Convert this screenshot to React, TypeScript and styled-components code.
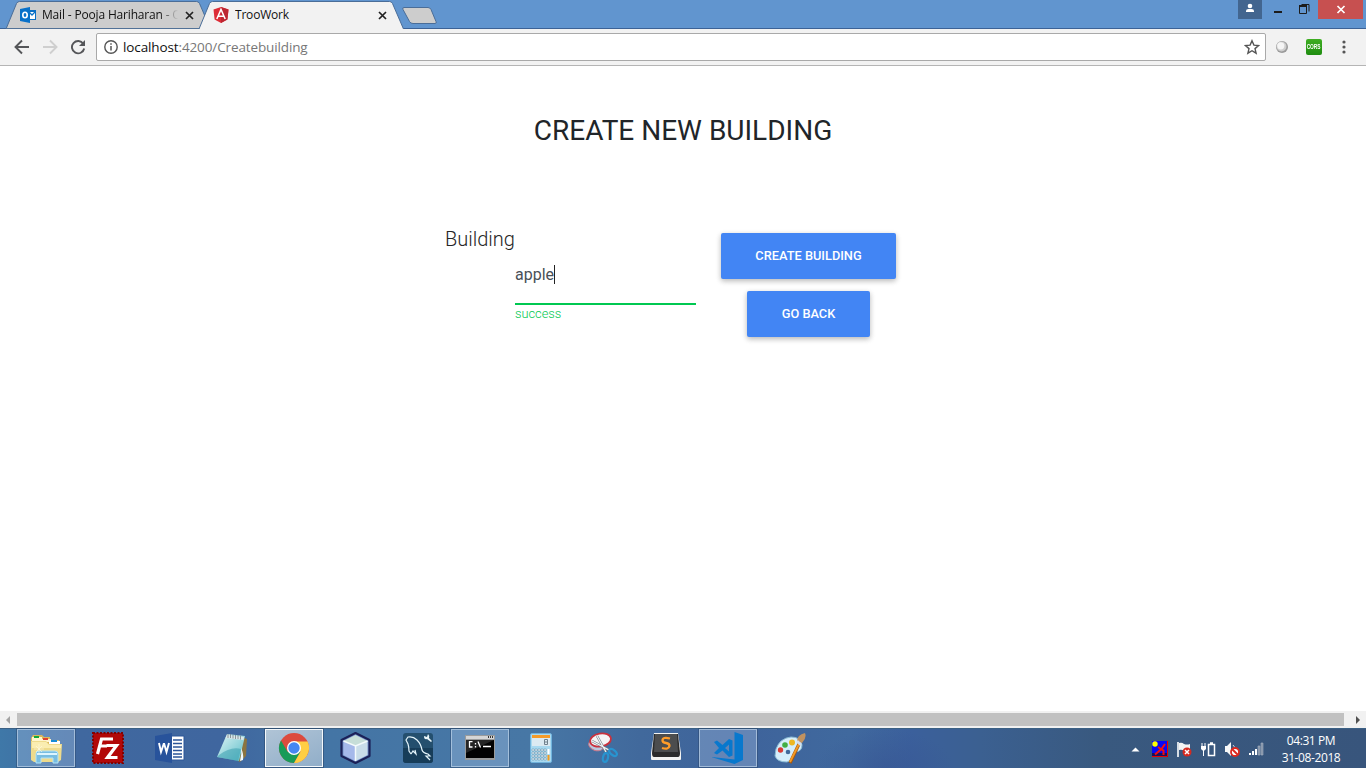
import React from "react";
import styled, { createGlobalStyle } from "styled-components";

const Global = createGlobalStyle`
  * { box-sizing: border-box; }
  body { margin: 0; overflow: hidden; background: #fff; }
  svg { display: block; flex: none; }
`;

const uiFont = `"Open Sans", "Noto Sans", sans-serif`;

const Screen = styled.div`
  width: 1366px;
  height: 768px;
  display: flex;
  flex-direction: column;
  overflow: hidden;
  background: #fff;
`;

/* ---------- browser window ---------- */

const TitleBar = styled.header`
  height: 29px;
  flex: none;
  display: flex;
  align-items: flex-start;
  padding-left: 5px;
  background: #6195cf;
  border-bottom: 1px solid #3c6296;
`;

const TabItem = styled.div<{ $active?: boolean }>`
  position: relative;
  z-index: ${(p) => (p.$active ? 2 : 1)};
  width: 206px;
  height: 29px;
  margin-right: -13px;
  padding: 1px 17px 0 15px;
  display: flex;
  align-items: center;
  font: 12px ${uiFont};
  color: #111;
`;

const TabShape = styled.svg`
  position: absolute;
  left: 0;
  top: 0;
  z-index: -1;
`;

const TabTitle = styled.span<{ $spacing: number; $fade?: boolean }>`
  flex: 1;
  margin-left: 6px;
  padding-bottom: 2px;
  overflow: hidden;
  white-space: nowrap;
  letter-spacing: ${(p) => p.$spacing}px;
  ${(p) => p.$fade && "mask-image: linear-gradient(90deg, #000 118px, transparent 136px);"}
`;

const NewTab = styled.svg`
  margin: 6px 0 0 10px;
`;

const WindowControls = styled.div`
  margin-left: auto;
  margin-right: 3px;
  display: flex;
  height: 19px;
`;

const Control = styled.div<{ $w: number; $bg?: string }>`
  width: ${(p) => p.$w}px;
  height: 19px;
  display: flex;
  justify-content: center;
  background: ${(p) => p.$bg ?? "transparent"};
`;

const Toolbar = styled.div`
  height: 37px;
  flex: none;
  display: flex;
  align-items: center;
  padding: 0 13px 1px 14px;
  background: #f2f2f2;
  border-bottom: 1px solid #b5b5b5;
`;

const NavIcons = styled.div`
  display: flex;
  gap: 12px;
  margin-right: 10px;
`;

const AddressBar = styled.div`
  width: 1170px;
  height: 28px;
  padding: 0 5px 0 6px;
  display: flex;
  align-items: center;
  background: #fff;
  border: 1px solid #a9a9a9;
  border-radius: 2px;
  font: 13.5px ${uiFont};
  color: #777;
`;

const Url = styled.span`
  flex: 1;
  margin-left: 4px;
  letter-spacing: -0.12px;
  b { font-weight: 400; color: #111; }
`;

const Extensions = styled.div`
  display: flex;
  align-items: center;
  margin-left: 8px;
`;

const CorsBadge = styled.span`
  width: 16px;
  height: 16px;
  margin: 0 20px 0 16px;
  border-radius: 2px;
  background: linear-gradient(#3fae22, #1e8c10);
  color: #fff;
  font: bold 8px/16px "Liberation Sans", sans-serif;
  text-align: center;
  display: flex;
  justify-content: center;
  span { transform: scaleX(0.6); }
`;

/* ---------- page ---------- */

const Page = styled.main`
  flex: 1;
  min-height: 0;
  font-family: Roboto, sans-serif;
  color: #212529;
  text-align: center;
`;

const Heading = styled.h3`
  margin: 0;
  padding-top: 48px;
  font-size: 28px;
  font-weight: 400;
  line-height: 34px;
`;

const Form = styled.form`
  display: flex;
  width: 451px;
  margin: 85px 0 0 445px;
  text-align: left;
`;

const Label = styled.label`
  width: 70px;
  margin-top: -8px;
  font-size: 20px;
  line-height: 28px;
  font-weight: 300;
  color: #262626;
  white-space: nowrap;
`;

const Field = styled.div`
  width: 181px;
  padding-top: 26px;
`;

const Value = styled.div`
  height: 46px;
  padding-top: 6px;
  display: flex;
  align-items: flex-start;
  border-bottom: 2px solid #00c851;
  font-size: 16px;
  line-height: 20px;
  color: #495057;
`;

const Caret = styled.i`
  width: 1px;
  height: 19px;
  background: #222;
`;

const Hint = styled.div`
  font-size: 12.8px;
  line-height: 17px;
  font-weight: 300;
  color: #00c851;
`;

const Actions = styled.div`
  display: flex;
  flex-direction: column;
  align-items: center;
  gap: 12px;
  width: 175px;
  margin-left: 25px;
`;

const Button = styled.button<{ $w: number }>`
  width: ${(p) => p.$w}px;
  height: 46px;
  padding: 0 0 2px;
  border: 0;
  border-radius: 2px;
  background: #4285f4;
  box-shadow: 0 2px 5px rgba(0, 0, 0, 0.16), 0 2px 6px rgba(0, 0, 0, 0.14);
  color: #fff;
  font: 500 12.8px Roboto, sans-serif;
`;

const ScrollBar = styled.div`
  height: 17px;
  flex: none;
  display: flex;
  align-items: center;
  padding: 0 5px;
  background: #f1f1f1;
`;

const Thumb = styled.div`
  width: 1327px;
  height: 13px;
  margin: 0 12px 0 7px;
  background: #c1c1c1;
`;

/* ---------- desktop taskbar ---------- */

const Taskbar = styled.footer`
  height: 40px;
  flex: none;
  display: flex;
  padding: 0 12px 0 17px;
  border-top: 1px solid #3b6084;
  background:
    radial-gradient(ellipse 70px 40px at 885px 40px, rgba(54, 82, 145, 0.5), transparent),
    linear-gradient(90deg, #3f78a8 0, #40689f 80px, #3f669f 220px, #4475a5 330px, #4777a5 530px, #41699c 640px, #3e639b 740px, #40699e 850px, #3b609c 910px, #3b6091 980px, #39597f 1100px, #38557c 1366px);
`;

const TaskList = styled.div`
  display: flex;
  gap: 4px;
`;

const Task = styled.div<{ $state?: "open" | "active" }>`
  width: 58px;
  height: 38px;
  display: flex;
  align-items: center;
  justify-content: center;
  ${(p) =>
    p.$state === "open" &&
    `background: rgba(180,205,235,.32); border: 1px solid rgba(195,215,235,.65); box-shadow: 0 0 0 1px rgba(40,65,100,.4);`}
  ${(p) =>
    p.$state === "active" &&
    `background: linear-gradient(155deg,#b0c4d6,#91aec9); border: 1px solid #f4f8fb; box-shadow: 0 0 0 1px rgba(40,65,100,.5);`}
`;

const Tray = styled.div`
  margin-left: auto;
  display: flex;
  align-items: center;
  gap: 8px;
  padding-top: 1px;
  color: #fff;
`;

const Clock = styled.div`
  width: 86px;
  margin: -1px 0 0 -4px;
  text-align: center;
  font: 12px/17px ${uiFont};
  letter-spacing: -0.4px;
`;

const I = ({ children, size = 32, box = 32 }: { children: React.ReactNode; size?: number; box?: number }) => (
  <svg width={size} height={size} viewBox={`0 0 ${box} ${box}`} fill="none">{children}</svg>
);

const Tab = ({ title, active, icon }: { title: string; active?: boolean; icon: React.ReactNode }) => (
  <TabItem $active={active}>
    <TabShape width="206" height="29" viewBox="0 0 206 29">
      <path
        d="M1 29L11.500 3.500Q12.500 1.500 14.500 1.500H191.500Q193.500 1.500 194.500 3.500L205.500 29"
        fill={active ? "#f2f2f2" : "#cdcdcd"}
        stroke="#4a6d98"
      />
      {!active && <path d="M1 28.5H205" stroke="#527297" />}
    </TabShape>
    {icon}
    <TabTitle $spacing={active ? -0.2 : -0.17} $fade={!active}>{title}</TabTitle>
    <I size={9} box={9}><path d="M1 1l7 7M8 1L1 8" stroke="#222" strokeWidth="1.7" /></I>
  </TabItem>
);

const Outlook = () => (
  <I size={16} box={16}>
    <path d="M8 3h8v10H8z" fill="#0b70c5" />
    <path d="M9 5h6v7H9z" fill="#fff" /><path d="M9 5l3 3 3-3" stroke="#0b70c5" strokeWidth="1.3" />
    <path d="M0 2l10-2v16L0 14z" fill="#0871c9" />
    <ellipse cx="5" cy="8" rx="2.2" ry="2.8" stroke="#fff" strokeWidth="1.6" />
  </I>
);

const Angular = () => (
  <I size={16} box={16}>
    <path d="M8 0l7.5 2.6-1.1 9.8L8 16l-6.4-3.6L.5 2.6z" fill="#dd2c37" />
    <path d="M8 0l7.5 2.6-1.1 9.8L8 16z" fill="#bd2631" />
    <path d="M3.8 12L8 2.4l4.2 9.6M5.5 9.2h5" stroke="#fff" strokeWidth="1.5" />
  </I>
);

const Explorer = () => (
  <I>
    <path d="M1 6l2-3h9l2 2h6v3h9v20H1z" fill="#d9b85b" />
    <path d="M2 5h10v4H2z" fill="#fff6ce" /><path d="M4 4h5v2H4z" fill="#12a83a" />
    <path d="M11 7h10v3H11z" fill="#fff4cf" /><path d="M13 6h5v2h-5z" fill="#dd4030" />
    <path d="M19 9h11v4H19z" fill="#fff" /><path d="M21 8h6v2h-6z" fill="#168cd5" />
    <path d="M1 9h15l3 3h13l-1 16-3 2H4l-3-2z" fill="#eedb8c" />
    <path d="M2 10h14l3 3h12v3H2z" fill="#faedb1" />
    <path d="M6 31V22q0-3 3-3h16q3 0 3 3v9h-5v-5H11v5z" fill="#78bde1" stroke="#b3e4f8" />
    <path d="M7 22h20" stroke="#dcf5ff" strokeWidth="2" />
    <path d="M9 12v10M4 17h10M6 14l6 6M12 14l-6 6" stroke="#fffbe4" strokeWidth=".6" />
  </I>
);

const FileZilla = () => (
  <I>
    <path d="M1 1h30v30H1z" fill="#b20808" stroke="#820000" strokeWidth="2" strokeDasharray="2 1.500" />
    <path d="M5.500 22L9.500 7H21M8 14H15" stroke="#fff" strokeWidth="3.200" />
    <path d="M14.500 13.500H24.500L15.500 25.500H25.500" stroke="#fff" strokeWidth="3.200" />
  </I>
);

const Word = () => (
  <I>
    <path d="M17 4h13v24H17z" fill="#fff" stroke="#2d5699" />
    <path d="M19 8h9M19 11.5h9M19 15h9M19 18.5h9M19 22h9M19 25h9" stroke="#2d5699" strokeWidth="1.5" />
    <path d="M1 4L18 1v30L1 28z" fill="#28539b" />
    <path d="M5 11l2 9 2.700-8h.500l2.300 8L15 11" stroke="#fff" strokeWidth="1.900" />
  </I>
);

const Notepad = () => (
  <I>
    <path d="M26 5l5 2-1 17-6 6-4-2z" fill="#8b7440" />
    <path d="M11 2l18 2-6 25L1 25z" fill="url(#note)" />
    <path d="M24 29q2-7 1-13 3 6 2 12z" fill="#eefaff" />
    <path d="M11 3l17 2-.6 3L9.5 6z" fill="#dce8ea" />
    <path d="M12 2v4M14.5 2v4M17 2.5v4M19.5 3v4M22 3v4M24.500 3.500v4" stroke="#718085" strokeWidth=".8" />
    <path d="M3 23q12-9 22-6l-3 12L1 25z" fill="#3b9fae" opacity=".55" />
    <defs><linearGradient id="note" x1="0" y1="0" x2="1" y2="1"><stop stopColor="#e2f5f5" /><stop offset="1" stopColor="#58bcc8" /></linearGradient></defs>
  </I>
);

const Chrome = () => (
  <I>
    <circle cx="16" cy="16" r="15" fill="#dc4b3e" />
    <path d="M3 8.500A15 15 0 0 0 16 31L22.500 19.750 9.500 19.750z" fill="#189b58" />
    <path d="M16 31A15 15 0 0 0 29.600 9.500H16L22.500 19.750z" fill="#ffce44" />
    <circle cx="16" cy="16" r="7" fill="#fff" /><circle cx="16" cy="16" r="5.700" fill="#4587f3" />
  </I>
);

const NetBeans = () => (
  <I>
    <path d="M15.500 1l14 7v16l-14 7-14-7V8z" fill="#7997cc" stroke="#1b2158" strokeWidth="2.200" strokeLinejoin="round" />
    <path d="M3.500 9l12 5v15L3.500 23z" fill="#a5b9ea" /><path d="M27.500 9l-12 5v15l12-6z" fill="#c9dde9" />
    <path d="M15.500 3l12 6-12 5-12-5z" fill="#c6ded8" />
    <path d="M3.500 9l12 5 12-5M15.500 14v15" stroke="#f3fafb" strokeWidth="1.500" />
  </I>
);

const MySql = () => (
  <I>
    <rect x="1" y="1" width="30" height="30" rx="3" fill="#244f6e" />
    <path d="M1 16h30v12a3 3 0 0 1-3 3H4a3 3 0 0 1-3-3z" fill="#173d59" />
    <path d="M9 22l-2-3q0-4-1-7L4 8l2-3q5-1 9 3 4 4 5 10 1 3 6 4l2 2-4 0 4 4M9 22l2-3 3 3-1-4" stroke="#e3f3fa" strokeWidth="1.200" />
    <path d="M22 4l3 1 1-3q2 2 1 4l3 3-1 1-4-3q-3 1-3-3z" fill="#e8f4f8" />
  </I>
);

const Terminal = () => (
  <I>
    <path d="M1 3h30v25H1z" fill="#999b9c" /><path d="M2 4h28v3H2z" fill="#d4d5d6" />
    <path d="M2 8h28v18H2z" fill="#020202" /><path d="M2 8h28L2 21z" fill="#252525" />
    <path d="M24 5h1m1 0h1m1 0h1" stroke="#333" strokeWidth="2" />
    <path d="M8.500 9.600H5.500v5.400h3M11.500 11v1.500m0 1.500v1.500M14 9.500l2.500 6M19 14.500h8" stroke="#fff" strokeWidth="1.300" />
  </I>
);

const Calculator = () => (
  <I>
    <rect x="4.500" y="1.500" width="21" height="29" rx="1.500" fill="#a9d9f0" stroke="#70b3dc" />
    <path d="M6 4h18v10H6z" fill="#dceaf2" /><path d="M6 3h18v3H6z" fill="#f59b29" />
    <path d="M18.500 7.500h3v5h-3zM18.500 10h3" stroke="#71818d" />
    {[17, 20, 23, 26].map((y) => [6, 9, 12, 15, 18].map((x) => (
      <path key={`${x}-${y}`} d={`M${x} ${y}h2.200v2h-2.200z`} fill="#fff" stroke="#6794af" strokeWidth=".6" />
    )))}
    <path d="M21.500 17h2v5h-2z" fill="#fff" /><path d="M21.500 23h2v5.500h-2z" fill="#f39b1d" />
  </I>
);

const Snip = () => (
  <I>
    <ellipse cx="8" cy="13.500" rx="7.500" ry="5" transform="rotate(20 8 13.500)" fill="#b9c9de" stroke="#c9788a" />
    <ellipse cx="12.500" cy="8" rx="10.500" ry="6.500" transform="rotate(-10 12.500 8)" fill="#f5f4f5" stroke="#c9323e" strokeWidth="1.800" />
    <path d="M9 4l9 16M4 9l17 9" stroke="#778087" strokeWidth="2.400" />
    <path d="M9 4l9 16M4 9l17 9" stroke="#f4f6f8" strokeWidth="1.200" />
    <ellipse cx="17.500" cy="25.500" rx="2.500" ry="4.500" transform="rotate(12 17.500 25.500)" stroke="#2894d0" strokeWidth="2.200" />
    <ellipse cx="25" cy="20.500" rx="2.500" ry="4.500" transform="rotate(-50 25 20.500)" stroke="#2894d0" strokeWidth="2.200" />
  </I>
);

const Sublime = () => (
  <I>
    <path d="M4 1h24l3 20v6q0 1-1 1H2q-1 0-1-1v-6z" fill="#f3f3f1" />
    <path d="M4 2h24l2 19q0 4-2 4H4q-2 0-2-4z" fill="#2b2b2b" />
    <path d="M5 2h22l1 18H4z" fill="#4c4d4e" />
    <path d="M20 6.500q-7.500-2-7.500 2 0 2 3.500 2.500t3.500 3q-1 4-7.500 2" stroke="#ff9c29" strokeWidth="2.300" />
  </I>
);

const Code = () => (
  <I>
    <path d="M22.500 0L31 3v25l-8.500 4L-1 25l23.500 2.500z" fill="#0878cd" />
    <path d="M2 10l3-1.500 5.500 4.500L17 7l3.500 1.500v15L17 25l-6.500-6.500L5 22.500 2 21l5-5zM17 12.500L13 16l4 3.500z" fill="#0878cd" fillRule="evenodd" />
  </I>
);

const Paint = () => (
  <I>
    <path d="M2 17Q6 6 17 5q10 0 11 8 0 6-6 7-4 1-3 4-1 5-6 6Q3 30 1 24z" fill="#d5eefb" stroke="#8bbbd4" />
    <circle cx="6.500" cy="18" r="2.700" fill="#da3c35" /><circle cx="11" cy="13" r="2.800" fill="#43af45" />
    <circle cx="18" cy="10.500" r="3" fill="#edb722" /><circle cx="14" cy="20" r="2.300" fill="#40699b" />
    <path d="M25 12L16 31" stroke="#a6570c" strokeWidth="3.200" /><path d="M25 12L16 30" stroke="#f49a25" strokeWidth="2" />
    <path d="M23 9q0-6 8-8 2 5-3 10z" fill="#c09260" /><path d="M23 9l4 4" stroke="#d3ddec" strokeWidth="2.500" />
  </I>
);

const tasks: { Icon: React.ComponentType; state?: "open" | "active" }[] = [
  { Icon: Explorer, state: "open" }, { Icon: FileZilla }, { Icon: Word }, { Icon: Notepad },
  { Icon: Chrome, state: "active" }, { Icon: NetBeans }, { Icon: MySql }, { Icon: Terminal, state: "open" },
  { Icon: Calculator }, { Icon: Snip }, { Icon: Sublime }, { Icon: Code, state: "open" }, { Icon: Paint },
];

export default function App() {
  return (
    <Screen>
      <Global />
      <TitleBar>
        <Tab title="Mail - Pooja Hariharan - O" icon={<Outlook />} />
        <Tab title="TrooWork" active icon={<Angular />} />
        <NewTab width="38" height="19" viewBox="0 0 38 19">
          <path d="M3 1.500H27Q29 1.500 30 3.500L35 15.500Q36 17.500 34 17.500H12Q9.500 17.500 8.500 15.500L2 3.500Q1 1.500 3 1.500z" fill="#cdcdcd" stroke="#4a6d98" />
        </NewTab>
        <WindowControls>
          <Control $w={24} $bg="#42658f">
            <svg width="24" height="19" viewBox="0 0 24 19"><circle cx="12" cy="6" r="2.300" fill="#fff" /><path d="M8 12v-1q0-2 2.500-2h3q2.500 0 2.500 2v1z" fill="#fff" /></svg>
          </Control>
          <Control $w={30}>
            <svg width="30" height="19" viewBox="0 0 30 19"><path d="M12 12h8" stroke="#1c1c1c" strokeWidth="2" /></svg>
          </Control>
          <Control $w={26}>
            <svg width="26" height="19" viewBox="0 0 26 19" fill="none" stroke="#1c1c1c"><path d="M7.500 6v7.500h7V6" /><path d="M7 6h8" strokeWidth="2" /><path d="M9.500 4.500h7.500v7" /></svg>
          </Control>
          <Control $w={45} $bg="#c75050">
            <svg width="45" height="19" viewBox="0 0 45 19"><path d="M19.500 6l7 7M26.500 6l-7 7" stroke="#fff" strokeWidth="1.700" /></svg>
          </Control>
        </WindowControls>
      </TitleBar>

      <Toolbar>
        <NavIcons>
          <I size={16} box={16}><path d="M15 8H2M8 1.500L1.500 8 8 14.500" stroke="#555659" strokeWidth="1.900" /></I>
          <I size={16} box={16}><path d="M1 8h13M8 1.500L14.500 8 8 14.500" stroke="#cfcfcf" strokeWidth="1.900" /></I>
          <I size={16} box={16}><path d="M13.300 4.700A6.200 6.200 0 1 0 14.200 9.500" stroke="#555659" strokeWidth="1.900" /><path d="M15 1v6H9z" fill="#555659" /></I>
        </NavIcons>
        <AddressBar>
          <I size={16} box={16}><circle cx="8" cy="8" r="6.200" stroke="#555" strokeWidth="1.400" /><path d="M8 7v4.500M8 4.300v1.500" stroke="#555" strokeWidth="1.500" /></I>
          <Url><b>localhost</b>:4200/Createbuilding</Url>
          <I size={16} box={16}><path d="M8 1.700l1.900 4.400 4.700.4-3.600 3.100 1.100 4.600L8 11.700l-4.100 2.500L5 9.600 1.400 6.500l4.700-.4z" stroke="#555" strokeWidth="1.400" /></I>
        </AddressBar>
        <Extensions>
          <I size={16} box={16}>
            <circle cx="8" cy="8" r="6" fill="#9a9a9a" /><circle cx="7.500" cy="7.500" r="5" fill="#cfcfcf" /><circle cx="6.800" cy="6.800" r="3.600" fill="#f5f5f5" />
          </I>
          <CorsBadge><span>CORS</span></CorsBadge>
          <svg width="4" height="14" viewBox="0 0 4 14" fill="#555"><circle cx="2" cy="2" r="1.600" /><circle cx="2" cy="7" r="1.600" /><circle cx="2" cy="12" r="1.600" /></svg>
        </Extensions>
      </Toolbar>

      <Page>
        <Heading>CREATE NEW BUILDING</Heading>
        <Form>
          <Label>Building</Label>
          <Field>
            <Value>apple<Caret /></Value>
            <Hint>success</Hint>
          </Field>
          <Actions>
            <Button type="button" $w={175}>CREATE BUILDING</Button>
            <Button type="button" $w={123}>GO BACK</Button>
          </Actions>
        </Form>
      </Page>

      <ScrollBar>
        <svg width="5" height="8" viewBox="0 0 5 8"><path d="M5 0v8L1 4z" fill="#a3a3a3" /></svg>
        <Thumb />
        <svg width="5" height="8" viewBox="0 0 5 8"><path d="M0 0v8l4-4z" fill="#505050" /></svg>
      </ScrollBar>

      <Taskbar>
        <TaskList>
          {tasks.map(({ Icon, state }, i) => <Task key={i} $state={state}><Icon /></Task>)}
        </TaskList>
        <Tray>
          <svg width="17" height="16" viewBox="0 0 17 16"><path d="M4.500 10.500l4-4 4 4z" fill="#fff" /></svg>
          <svg width="16" height="16" viewBox="0 0 16 16">
            <path d="M0 0h16v16H0z" fill="#0808f5" /><path d="M0 12h16v4H0z" fill="#181060" />
            <path d="M15.500 0v15.500H0" fill="none" stroke="#e00" />
            <circle cx="3" cy="3" r="2.700" fill="#ff0" /><path d="M13 3L9.500 8 3 13.500M6 6l3.500 2.500 2 1V14" fill="none" stroke="#f01010" strokeWidth="2" />
          </svg>
          <I size={16} box={16}><path d="M2 1v15" stroke="#fff" strokeWidth="1.600" /><path d="M3 2q3-1 5 1 3 1 6 0v7q-3 2-6 0-2-2-5-1z" fill="#f4f4f4" /><circle cx="11" cy="11" r="4.500" fill="#d62a20" /><path d="M9 9l4 4M13 9l-4 4" stroke="#fff" strokeWidth="1.500" /></I>
          <I size={16} box={16}><path d="M2 2v3M5 2v3" stroke="#fff" /><path d="M1 5h5v3L4.500 9.500h-2L1 8z" fill="#fff" /><path d="M3.500 9v6" stroke="#fff" /><path d="M8.500 3.500h6v11h-6zM10 2h3" stroke="#fff" strokeWidth="1.500" /></I>
          <I size={16} box={16}><path d="M1 5h2l4-4v14l-4-4H1z" fill="#f8f8f8" /><path d="M9 4q2 2 2 4" stroke="#ccd5df" /><circle cx="11" cy="11" r="4" fill="#fff" stroke="#dd291f" strokeWidth="1.800" /><path d="M8 8l6 6" stroke="#dd291f" strokeWidth="2" /></I>
          <I size={16} box={16}>
            <path d="M1 12h2v2H1zM4 10h2v4H4zM7 8h2v6H7z" fill="#fff" /><path d="M10 5h2v9h-2zM13 2h2v12h-2z" fill="#8191a5" stroke="#a9b4c2" strokeWidth=".6" />
          </I>
          <Clock>04:31 PM<br />31-08-2018</Clock>
        </Tray>
      </Taskbar>
    </Screen>
  );
}
